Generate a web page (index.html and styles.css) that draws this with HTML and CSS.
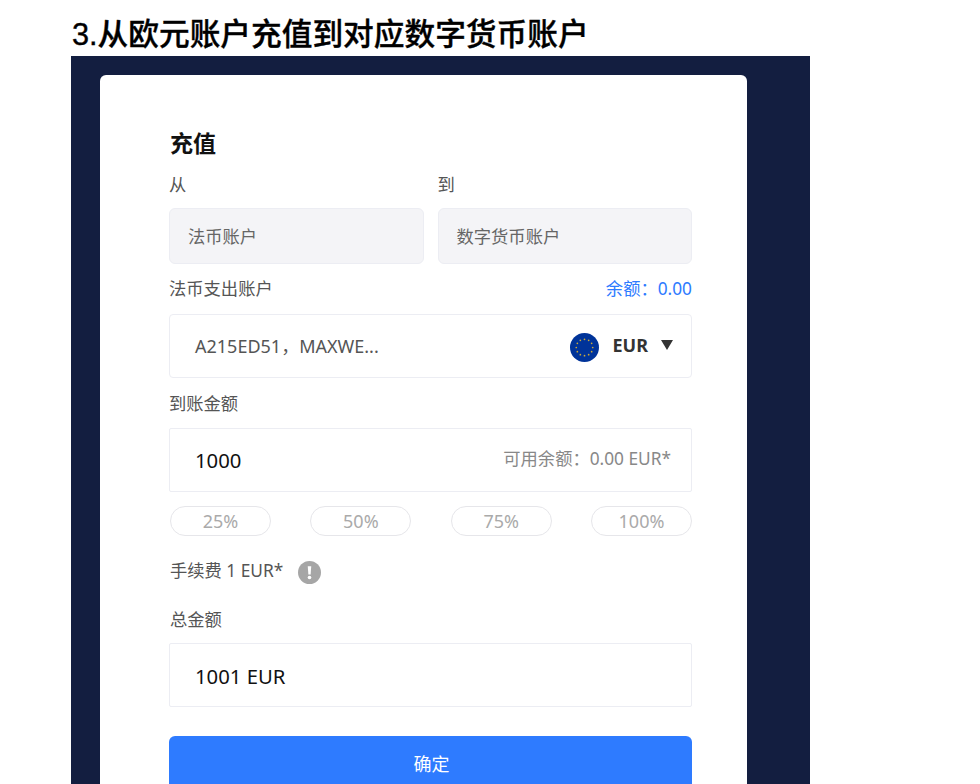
FILE: index.html
```html
<!DOCTYPE html>
<html lang="zh">
<head>
<meta charset="utf-8">
<title>充值</title>
<link rel="stylesheet" href="styles.css">
</head>
<body>
<h1 class="title">3.从欧元账户充值到对应数字货币账户</h1>
<div class="panel">
  <div class="card">
    <h2 class="heading">充值</h2>
    <div class="pair">
      <div class="col">
        <div class="label">从</div>
        <div class="readonly">法币账户</div>
      </div>
      <div class="col">
        <div class="label">到</div>
        <div class="readonly">数字货币账户</div>
      </div>
    </div>
    <div class="label-row">
      <span class="label">法币支出账户</span>
      <span class="balance">余额&#xFF1A;0.00</span>
    </div>
    <div class="field select">
      <span class="account">A215ED51&#xFF0C;MAXWE...</span>
      <span class="currency">
        <svg class="flag" viewBox="0 0 30 30" aria-hidden="true">
          <circle cx="15" cy="15" r="15" fill="#003399"/>
          <g fill="#c9a93a">
            <circle cx="15" cy="6.5" r="0.9"/><circle cx="19.3" cy="7.6" r="0.9"/><circle cx="22.4" cy="10.7" r="0.9"/>
            <circle cx="23.5" cy="15" r="0.9"/><circle cx="22.4" cy="19.3" r="0.9"/><circle cx="19.3" cy="22.4" r="0.9"/>
            <circle cx="15" cy="23.5" r="0.9"/><circle cx="10.7" cy="22.4" r="0.9"/><circle cx="7.6" cy="19.3" r="0.9"/>
            <circle cx="6.5" cy="15" r="0.9"/><circle cx="7.6" cy="10.7" r="0.9"/><circle cx="10.7" cy="7.6" r="0.9"/>
          </g>
        </svg>
        <b class="code">EUR</b>
        <svg class="caret" viewBox="0 0 12 10" aria-hidden="true"><path d="M0 0H12L6 10Z" fill="#333"/></svg>
      </span>
    </div>
    <div class="label spaced">到账金额</div>
    <div class="field amount">
      <span class="value">1000</span>
      <span class="available">可用余额&#xFF1A;0.00 EUR*</span>
    </div>
    <div class="pills">
      <span class="pill">25%</span>
      <span class="pill">50%</span>
      <span class="pill">75%</span>
      <span class="pill">100%</span>
    </div>
    <div class="fee">
      <span class="label">手续费 1 EUR*</span>
      <svg class="info" viewBox="0 0 24 24" aria-hidden="true">
        <circle cx="12" cy="12" r="12" fill="#a6a6a6"/>
        <path d="M10.2 5.5h3.6l-.6 8.5h-2.4z" fill="#fff"/>
        <circle cx="12" cy="17.2" r="1.9" fill="#fff"/>
      </svg>
    </div>
    <div class="label total-label">总金额</div>
    <div class="field total"><span class="value">1001 EUR</span></div>
    <button class="submit" type="button">确定</button>
  </div>
</div>
</body>
</html>
```
FILE: styles.css
```css
* { box-sizing: border-box; }
html, body { height: 784px; overflow: hidden; }
body {
  margin: 0;
  background: #fff;
  font-family: "Noto Sans", "Noto Sans CJK SC", sans-serif;
  color: #444;
}
.title {
  margin: 0 0 0 72px;
  height: 56px;
  padding-top: 14px;
  font: 500 30.7px/42px "Liberation Sans", "Noto Sans CJK SC", sans-serif;
  -webkit-text-stroke: 0.35px #000;
  color: #000;
  white-space: nowrap;
}
.panel {
  margin-left: 71px;
  width: 739px;
  height: 728px;
  padding: 19px 0 0 29px;
  background: #131e40;
  overflow: hidden;
}
.card {
  width: 647px;
  height: 760px;
  padding: 50px 55px 0 69px;
  background: #fff;
  border-radius: 6px;
}
.heading {
  margin: 0 0 0 1px;
  height: 34px;
  font: 700 23px/34px "Noto Sans CJK SC", sans-serif;
  color: #111;
}
.label {
  font-size: 17.3px;
  line-height: 24px;
  color: #555;
}
.pair {
  display: flex;
  gap: 14px;
  margin-top: 14px;
}
.col { flex: 1; }
.readonly {
  height: 56px;
  margin-top: 11px;
  padding-left: 18px;
  background: #f4f4f7;
  border: 1px solid #ecedf3;
  border-radius: 6px;
  font-size: 17.3px;
  line-height: 56px;
  color: #666;
}
.label-row {
  display: flex;
  justify-content: space-between;
  margin-top: 13px;
  height: 24px;
  line-height: 24px;
}
.balance { font-size: 17.3px; color: #2e7bff; }
.field {
  display: flex;
  align-items: center;
  justify-content: space-between;
  height: 64px;
  border: 1px solid #ecedf3;
  border-radius: 2px;
  padding: 0 18px 0 25px;
}
.select { margin-top: 13px; border-radius: 4px; }
.account { font-size: 18px; color: #555; margin-top: -2px; }
.currency { display: flex; align-items: center; }
.flag { width: 29px; height: 29px; margin-top: 3px; }
.code { margin-left: 14px; font-size: 18px; font-weight: 700; color: #333; margin-top: -2px; }
.caret { width: 12px; height: 10px; margin-left: 13px; margin-top: -2px; }
.spaced { margin-top: 14px; }
.amount { margin-top: 12px; padding-right: 20px; }
.value { font-size: 20.3px; color: #111; }
.amount .value { margin-top: -1px; }
.available { font-size: 17.3px; color: #888; margin-top: -6px; }
.pills {
  display: flex;
  justify-content: space-between;
  margin: 14px 0 0 1px;
}
.pill {
  width: 101px;
  height: 30px;
  border: 1px solid #e6e6ea;
  border-radius: 15px;
  text-align: center;
  font-size: 18px;
  line-height: 29px;
  color: #aaa;
}
.fee {
  display: flex;
  align-items: center;
  gap: 15px;
  margin: 20px 0 0 1px;
  height: 30px;
}
.info { width: 23px; height: 23px; margin-top: 3px; }
.total-label { margin: 22px 0 0 1px; }
.total { margin-top: 11px; }
.total .value { margin-top: 1px; }
.submit {
  display: block;
  width: 100%;
  height: 56px;
  margin-top: 29px;
  border: 0;
  border-radius: 6px;
  background: #2e7bff;
  color: #fff;
  font: 400 18px/52px "Noto Sans CJK SC", sans-serif;
  padding: 0 0 2px 2px;
}
```
